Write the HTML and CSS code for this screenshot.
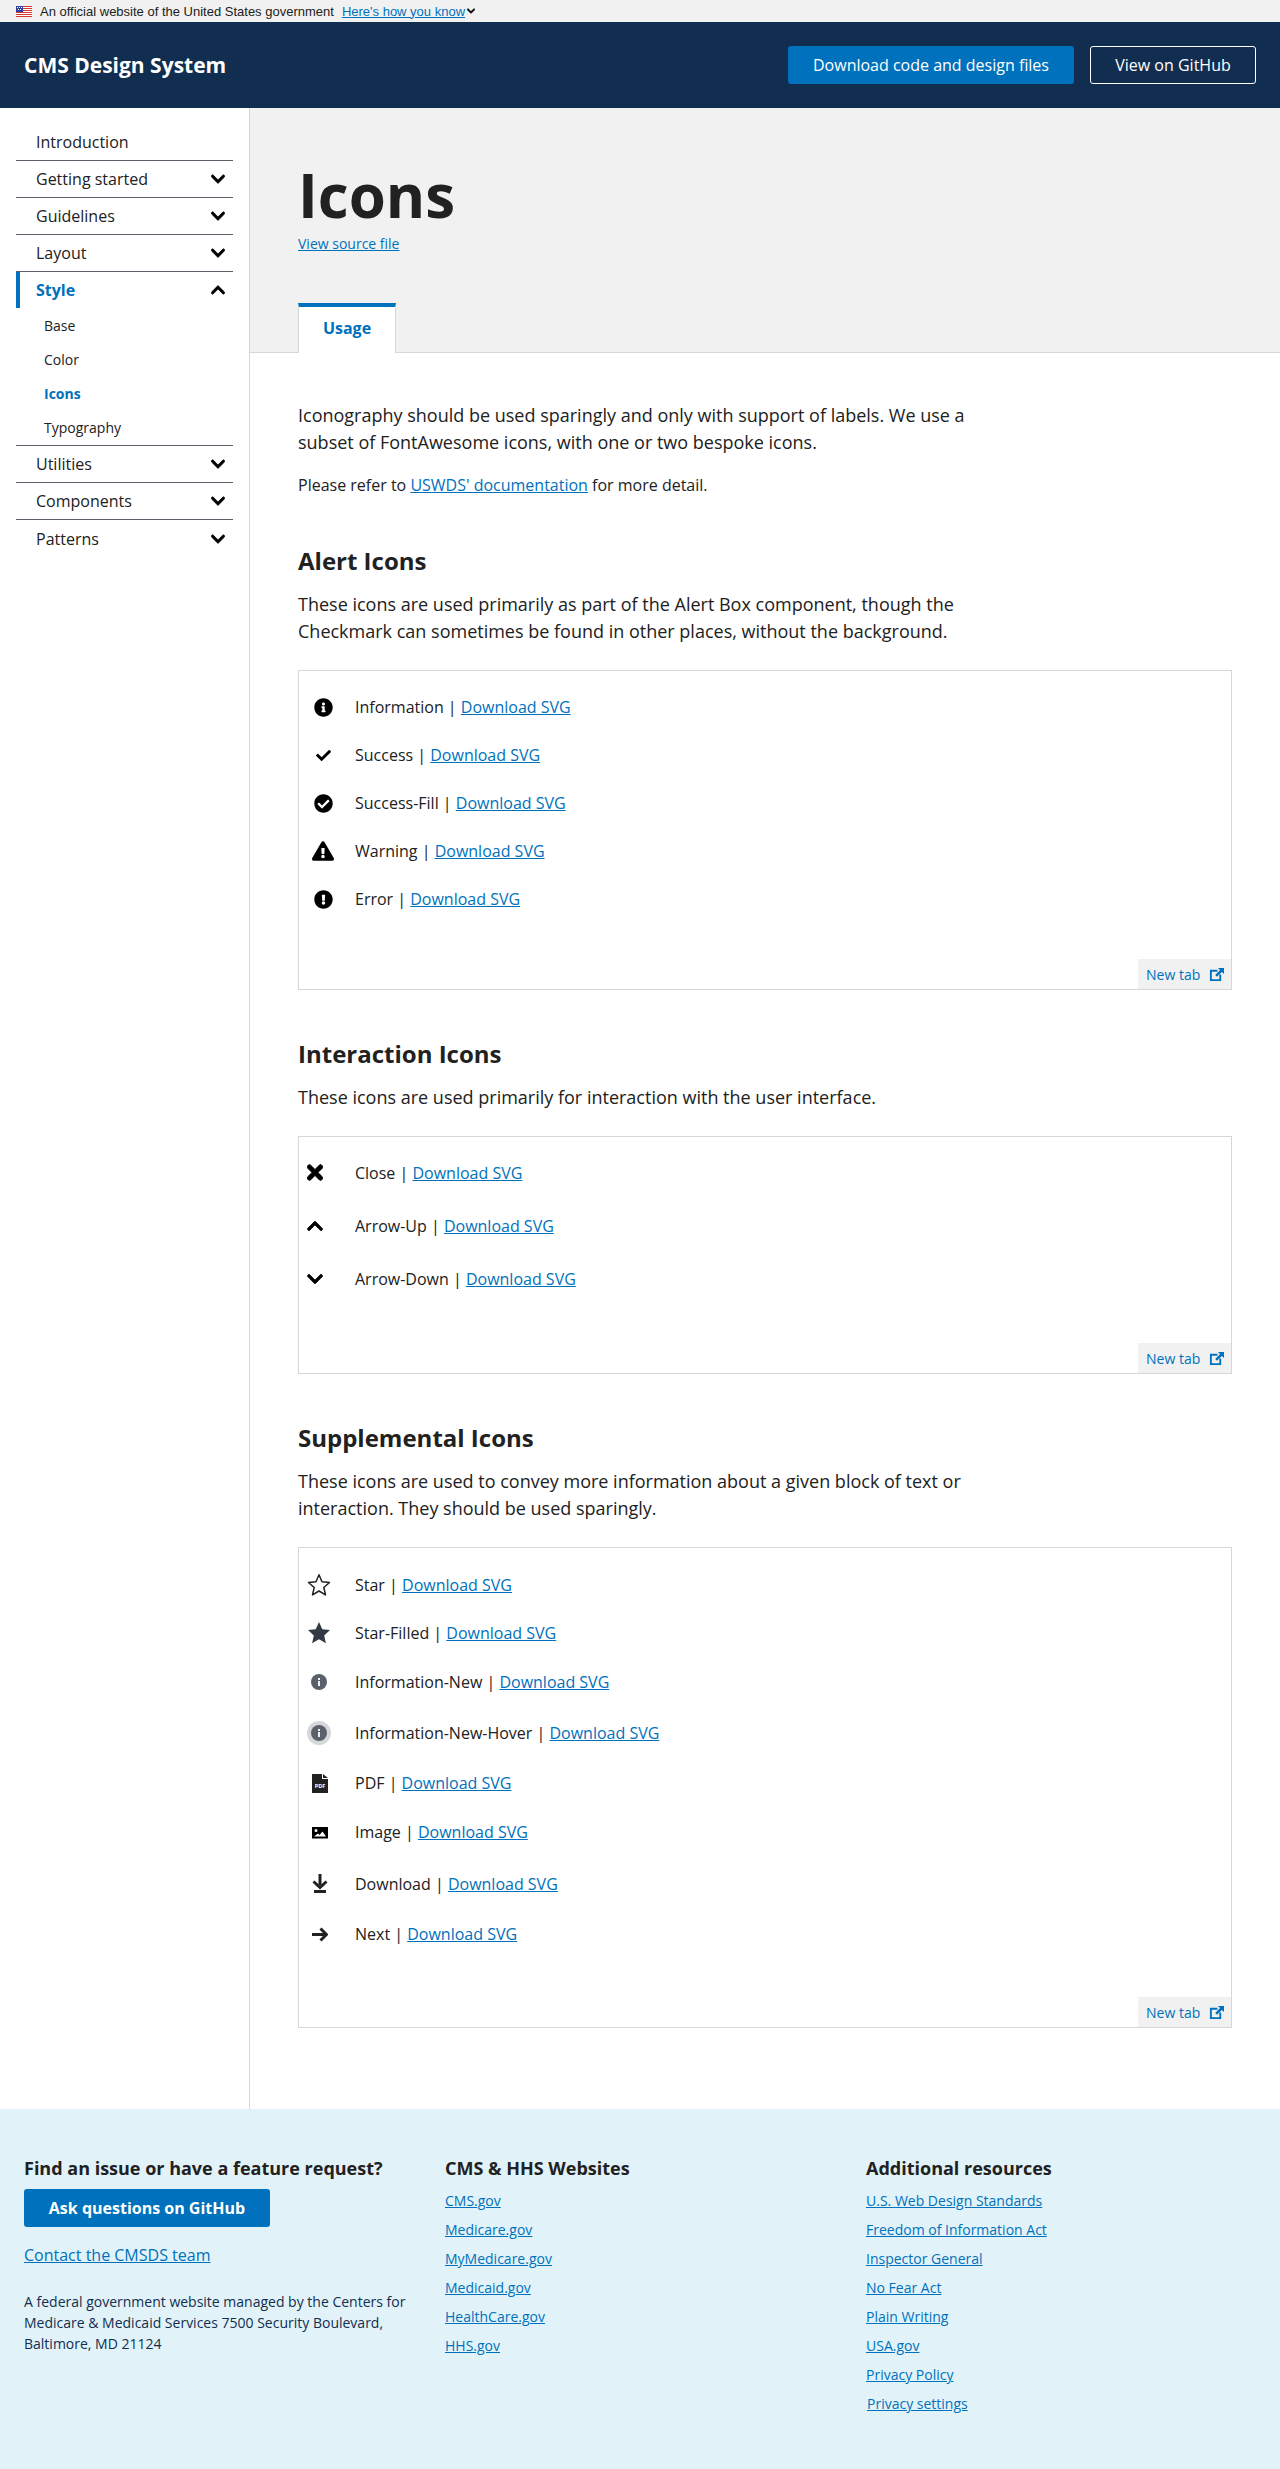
FILE: index.html
```html
<!DOCTYPE html>
<html lang="en">
<head>
    <meta charset="UTF-8">
    <meta name="viewport" content="width=device-width, initial-scale=1.0">
    <title>Icons - CMS Design System</title>
    <link rel="stylesheet" href="styles.css">
</head>
<body>
    <svg class="sprites" xmlns="http://www.w3.org/2000/svg">
        <symbol id="i-down" viewBox="0 0 448 512"><path d="M207.029 381.476L12.686 187.132c-9.373-9.373-9.373-24.569 0-33.941l22.667-22.667c9.357-9.357 24.522-9.375 33.901-.04L224 284.505l154.745-154.021c9.379-9.335 24.544-9.317 33.901.04l22.667 22.667c9.373 9.373 9.373 24.569 0 33.941L240.971 381.476c-9.373 9.372-24.569 9.372-33.942 0z"/></symbol>
        <symbol id="i-up" viewBox="0 0 448 512"><path d="M240.971 130.524l194.343 194.343c9.373 9.373 9.373 24.569 0 33.941l-22.667 22.667c-9.357 9.357-24.522 9.375-33.901.04L224 227.495 69.255 381.516c-9.379 9.335-24.544 9.317-33.901-.04l-22.667-22.667c-9.373-9.373-9.373-24.569 0-33.941L207.03 130.525c9.372-9.373 24.568-9.373 33.941-.001z"/></symbol>
        <symbol id="i-info" viewBox="0 0 512 512"><path d="M256 8C119.043 8 8 119.083 8 256c0 136.997 111.043 248 248 248s248-111.003 248-248C504 119.083 392.957 8 256 8zm0 110c23.196 0 42 18.804 42 42s-18.804 42-42 42-42-18.804-42-42 18.804-42 42-42zm56 254c0 6.627-5.373 12-12 12h-88c-6.627 0-12-5.373-12-12v-24c0-6.627 5.373-12 12-12h12v-64h-12c-6.627 0-12-5.373-12-12v-24c0-6.627 5.373-12 12-12h64c6.627 0 12 5.373 12 12v100h12c6.627 0 12 5.373 12 12v24z"/></symbol>
        <symbol id="i-check" viewBox="0 0 512 512"><path d="M173.898 439.404l-166.4-166.4c-9.997-9.997-9.997-26.206 0-36.204l36.203-36.204c9.997-9.998 26.207-9.998 36.204 0L192 312.69 432.095 72.596c9.997-9.997 26.207-9.997 36.204 0l36.203 36.204c9.997 9.997 9.997 26.206 0 36.204l-294.4 294.401c-9.998 9.997-26.207 9.997-36.204-.001z"/></symbol>
        <symbol id="i-check-circle" viewBox="0 0 512 512"><path d="M504 256c0 136.967-111.033 248-248 248S8 392.967 8 256 119.033 8 256 8s248 111.033 248 248zM227.314 387.314l184-184c6.248-6.248 6.248-16.379 0-22.627l-22.627-22.627c-6.248-6.249-16.379-6.249-22.628 0L216 308.118l-70.059-70.059c-6.248-6.248-16.379-6.248-22.628 0l-22.627 22.627c-6.248 6.248-6.248 16.379 0 22.627l104 104c6.249 6.249 16.379 6.249 22.628.001z"/></symbol>
        <symbol id="i-warning" viewBox="0 0 576 512"><path d="M569.517 440.013C587.975 472.007 564.806 512 527.94 512H48.054c-36.937 0-59.999-40.055-41.577-71.987L246.423 23.985c18.467-32.009 64.72-31.951 83.154 0l239.94 416.028zM288 354c-25.405 0-46 20.595-46 46s20.595 46 46 46 46-20.595 46-46-20.595-46-46-46zm-43.673-165.346l7.418 136c.347 6.364 5.609 11.346 11.982 11.346h48.546c6.373 0 11.635-4.982 11.982-11.346l7.418-136c.375-6.874-5.098-12.654-11.982-12.654h-63.383c-6.884 0-12.356 5.78-11.981 12.654z"/></symbol>
        <symbol id="i-error" viewBox="0 0 512 512"><path d="M504 256c0 136.997-111.043 248-248 248S8 392.997 8 256C8 119.083 119.043 8 256 8s248 111.083 248 248zm-248 50c-25.405 0-46 20.595-46 46s20.595 46 46 46 46-20.595 46-46-20.595-46-46-46zm-43.673-165.346l7.418 136c.347 6.364 5.609 11.346 11.982 11.346h48.546c6.373 0 11.635-4.982 11.982-11.346l7.418-136c.375-6.874-5.098-12.654-11.982-12.654h-63.383c-6.884 0-12.356 5.78-11.981 12.654z"/></symbol>
        <symbol id="i-close" viewBox="0 0 352 512"><path d="M242.72 256l100.07-100.07c12.28-12.28 12.28-32.19 0-44.48l-22.24-22.24c-12.28-12.28-32.19-12.28-44.48 0L176 189.28 75.93 89.21c-12.28-12.28-32.19-12.28-44.48 0L9.21 111.45c-12.28 12.28-12.28 32.19 0 44.48L109.28 256 9.21 356.07c-12.28 12.28-12.28 32.19 0 44.48l22.24 22.24c12.28 12.28 32.2 12.28 44.48 0L176 322.72l100.07 100.07c12.28 12.28 32.2 12.28 44.48 0l22.24-22.24c12.28-12.28 12.28-32.19 0-44.48L242.72 256z"/></symbol>
        <symbol id="i-external" viewBox="0 0 16 16"><path d="M1 3h8v2H3v8h8V8h2v7H1z"/><path d="M9.500 1H16v6.500l-2.300-2.300-5.200 5.200-1.900-1.900 5.200-5.200z"/></symbol>
    </svg>

    <div class="gov-banner">
        <svg class="flag" viewBox="0 0 16 11">
            <rect width="16" height="11" fill="#fff"/>
            <path d="M0 0h16v1H0zM0 2h16v1H0zM0 4h16v1H0zM0 6h16v1H0zM0 8h16v1H0zM0 10h16v1H0z" fill="#d83933"/>
            <rect width="7" height="6" fill="#2e3f9e"/>
            <path d="M1 1h1v1H1zM3 1h1v1H3zM5 1h1v1H5zM2 3h1v1H2zM4 3h1v1H4z" fill="#fff"/>
        </svg>
        <span>An official website of the United States government</span>
        <a href="#">Here's how you know</a>
        <svg class="banner-caret"><use href="#i-down"/></svg>
    </div>

    <header class="site-header">
        <a class="logo" href="#">CMS Design System</a>
        <div class="header-actions">
            <a class="btn btn-primary" href="#">Download code and design files</a>
            <a class="btn btn-outline" href="#">View on GitHub</a>
        </div>
    </header>

    <div class="page">
        <nav class="sidebar">
            <ul class="nav">
                <li class="nav-item"><a href="#">Introduction</a></li>
                <li class="nav-item"><a href="#">Getting started</a><svg class="caret"><use href="#i-down"/></svg></li>
                <li class="nav-item"><a href="#">Guidelines</a><svg class="caret"><use href="#i-down"/></svg></li>
                <li class="nav-item"><a href="#">Layout</a><svg class="caret"><use href="#i-down"/></svg></li>
                <li class="nav-item nav-open"><a href="#">Style</a><svg class="caret"><use href="#i-up"/></svg></li>
                <li class="nav-sub">
                    <a href="#">Base</a>
                    <a href="#">Color</a>
                    <a class="current" href="#">Icons</a>
                    <a href="#">Typography</a>
                </li>
                <li class="nav-item"><a href="#">Utilities</a><svg class="caret"><use href="#i-down"/></svg></li>
                <li class="nav-item"><a href="#">Components</a><svg class="caret"><use href="#i-down"/></svg></li>
                <li class="nav-item"><a href="#">Patterns</a><svg class="caret"><use href="#i-down"/></svg></li>
            </ul>
        </nav>

        <main class="main">
            <div class="hero">
                <h1>Icons</h1>
                <a class="source-link" href="#">View source file</a>
                <div class="tabs"><a class="tab" href="#">Usage</a></div>
            </div>

            <div class="content">
                <p class="lead">Iconography should be used sparingly and only with support of labels. We use a subset of FontAwesome icons, with one or two bespoke icons.</p>
                <p class="note">Please refer to <a href="#">USWDS' documentation</a> for more detail.</p>

                <h2>Alert Icons</h2>
                <p class="lead">These icons are used primarily as part of the Alert Box component, though the Checkmark can sometimes be found in other places, without the background.</p>
                <section class="panel panel-alert">
                    <div class="row"><span class="ico"><svg class="s19"><use href="#i-info"/></svg></span><span>Information | <a href="#">Download SVG</a></span></div>
                    <div class="row"><span class="ico"><svg class="s15"><use href="#i-check"/></svg></span><span>Success | <a href="#">Download SVG</a></span></div>
                    <div class="row"><span class="ico"><svg class="s19"><use href="#i-check-circle"/></svg></span><span>Success-Fill | <a href="#">Download SVG</a></span></div>
                    <div class="row"><span class="ico"><svg class="s22"><use href="#i-warning"/></svg></span><span>Warning | <a href="#">Download SVG</a></span></div>
                    <div class="row"><span class="ico"><svg class="s19"><use href="#i-error"/></svg></span><span>Error | <a href="#">Download SVG</a></span></div>
                    <a class="new-tab" href="#">New tab <svg><use href="#i-external"/></svg></a>
                </section>

                <h2>Interaction Icons</h2>
                <p class="lead">These icons are used primarily for interaction with the user interface.</p>
                <section class="panel panel-interaction">
                    <div class="row"><span class="ico"><svg class="s22"><use href="#i-close"/></svg></span><span>Close | <a href="#">Download SVG</a></span></div>
                    <div class="row"><span class="ico"><svg class="s18"><use href="#i-up"/></svg></span><span>Arrow-Up | <a href="#">Download SVG</a></span></div>
                    <div class="row"><span class="ico"><svg class="s18"><use href="#i-down"/></svg></span><span>Arrow-Down | <a href="#">Download SVG</a></span></div>
                    <a class="new-tab" href="#">New tab <svg><use href="#i-external"/></svg></a>
                </section>

                <h2>Supplemental Icons</h2>
                <p class="lead">These icons are used to convey more information about a given block of text or interaction. They should be used sparingly.</p>
                <section class="panel panel-supplemental">
                    <div class="row"><span class="ico">
                        <svg class="s24" viewBox="0 0 24 24"><path d="M12 1.800l3 7 7.500.7-5.700 5 1.700 7.400L12 18l-6.500 3.900 1.700-7.400-5.700-5 7.500-.7z" fill="none" stroke="#212121" stroke-width="1.500" stroke-linejoin="round"/></svg>
                    </span><span>Star | <a href="#">Download SVG</a></span></div>
                    <div class="row"><span class="ico">
                        <svg class="s24" viewBox="0 0 24 24"><path d="M12 1l3.300 7.300 7.700.8-5.800 5.300 1.700 7.800L12 18.200l-6.900 4 1.700-7.800L1 9.100l7.700-.8z" fill="#323a45"/></svg>
                    </span><span>Star-Filled | <a href="#">Download SVG</a></span></div>
                    <div class="row row-50"><span class="ico">
                        <svg class="s24" viewBox="0 0 24 24"><circle cx="12" cy="12" r="8" fill="#5b616b"/><rect x="11" y="11" width="2" height="5" fill="#f1f1f1"/><rect x="11" y="8" width="2" height="2" fill="#f1f1f1"/></svg>
                    </span><span>Information-New | <a href="#">Download SVG</a></span></div>
                    <div class="row row-52"><span class="ico">
                        <svg class="s24" viewBox="0 0 24 24"><circle cx="12" cy="12" r="12" fill="#d6d7d9"/><circle cx="12" cy="12" r="8" fill="#5b616b"/><rect x="11" y="11" width="2" height="5" fill="#f1f1f1"/><rect x="11" y="8" width="2" height="2" fill="#f1f1f1"/></svg>
                    </span><span>Information-New-Hover | <a href="#">Download SVG</a></span></div>
                    <div class="row"><span class="ico">
                        <svg class="doc" viewBox="0 0 16 19"><path d="M0 0h10v5h6v14H0zM11 0l5 4h-5z" fill="#212121"/><text x="8" y="14" class="doc-label">PDF</text></svg>
                    </span><span>PDF | <a href="#">Download SVG</a></span></div>
                    <div class="row row-50"><span class="ico">
                        <svg class="doc" viewBox="0 0 16 19"><path fill-rule="evenodd" d="M0 4h16v11.500H0zM4 6a1.500 1.500 0 1 0 0 3 1.500 1.500 0 0 0 0-3zM2 13.500h12l-3.500-5-3 3.500-1.500-1.500z" fill="#000"/></svg>
                    </span><span>Image | <a href="#">Download SVG</a></span></div>
                    <div class="row row-53"><span class="ico">
                        <svg class="doc" viewBox="0 0 16 19"><path d="M6.500 0h3v11h-3zM2 16h12v3H2z" fill="#212121"/><path d="M1.500 7.500L8 13.500l6.500-6" fill="none" stroke="#212121" stroke-width="3"/></svg>
                    </span><span>Download | <a href="#">Download SVG</a></span></div>
                    <div class="row"><span class="ico">
                        <svg class="doc" viewBox="0 0 16 19"><path d="M0 8h13v3H0z" fill="#212121"/><path d="M8.500 3.500l6 6-6 6" fill="none" stroke="#212121" stroke-width="3"/></svg>
                    </span><span>Next | <a href="#">Download SVG</a></span></div>
                    <a class="new-tab" href="#">New tab <svg><use href="#i-external"/></svg></a>
                </section>
            </div>
        </main>
    </div>

    <footer class="site-footer">
        <div class="footer-col">
            <h3>Find an issue or have a feature request?</h3>
            <a class="btn btn-primary btn-github" href="#">Ask questions on GitHub</a>
            <a class="contact" href="#">Contact the CMSDS team</a>
            <p class="address">A federal government website managed by the Centers for Medicare &amp; Medicaid Services 7500 Security Boulevard, Baltimore, MD 21124</p>
        </div>
        <div class="footer-col">
            <h3>CMS &amp; HHS Websites</h3>
            <ul class="footer-links">
                <li><a href="#">CMS.gov</a></li>
                <li><a href="#">Medicare.gov</a></li>
                <li><a href="#">MyMedicare.gov</a></li>
                <li><a href="#">Medicaid.gov</a></li>
                <li><a href="#">HealthCare.gov</a></li>
                <li><a href="#">HHS.gov</a></li>
            </ul>
        </div>
        <div class="footer-col">
            <h3>Additional resources</h3>
            <ul class="footer-links">
                <li><a href="#">U.S. Web Design Standards</a></li>
                <li><a href="#">Freedom of Information Act</a></li>
                <li><a href="#">Inspector General</a></li>
                <li><a href="#">No Fear Act</a></li>
                <li><a href="#">Plain Writing</a></li>
                <li><a href="#">USA.gov</a></li>
                <li><a href="#">Privacy Policy</a></li>
                <li class="privacy"><a href="#">Privacy settings</a></li>
            </ul>
        </div>
    </footer>
</body>
</html>
```

FILE: styles.css
```css
body {
    margin: 0;
    font-family: "Open Sans", sans-serif;
    font-size: 16px;
    color: #212121;
    background: #fff;
}
a {
    color: #0071bc;
}
.sprites {
    display: none;
}

/* gov banner */
.gov-banner {
    height: 22px;
    padding-left: 16px;
    display: flex;
    align-items: center;
    background: #f1f1f1;
    font-family: "Liberation Sans", Arial, sans-serif;
    font-size: 13px;
}
.flag {
    width: 16px;
    height: 11px;
    margin-right: 8px;
}
.gov-banner a {
    margin-left: 8px;
}
.banner-caret {
    width: 8px;
    height: 10px;
    margin-left: 2px;
    stroke: #000;
    stroke-width: 30;
}

/* header */
.site-header {
    height: 86px;
    padding: 0 24px;
    display: flex;
    align-items: center;
    justify-content: space-between;
    background: #112e51;
}
.logo {
    color: #fff;
    font-size: 21px;
    font-weight: 700;
    text-decoration: none;
}
.header-actions {
    display: flex;
    gap: 16px;
    margin-top: -1px;
}
.btn {
    box-sizing: border-box;
    height: 38px;
    display: flex;
    align-items: center;
    justify-content: center;
    border-radius: 3px;
    color: #fff;
    text-decoration: none;
}
.btn-primary {
    background: #0071bc;
    width: 286px;
}
.btn-outline {
    width: 166px;
    border: 1px solid #fff;
}

/* layout */
.page {
    display: flex;
}
.sidebar {
    box-sizing: border-box;
    width: 250px;
    padding: 16px 16px 0;
    border-right: 1px solid #d6d7d9;
    flex-shrink: 0;
}
.main {
    flex: 1;
    min-width: 0;
}

/* side nav */
.nav {
    list-style: none;
    margin: 0;
    padding: 0;
    width: 217px;
}
.nav-item {
    box-sizing: border-box;
    height: 37px;
    padding: 0 8px 0 20px;
    display: flex;
    align-items: center;
    justify-content: space-between;
    border-bottom: 1px solid #5b616b;
}
.nav-item a {
    color: #212121;
    text-decoration: none;
}
.nav-item:last-child {
    border-bottom: 0;
}
.nav-open {
    height: 36px;
    padding-left: 16px;
    border-bottom: 0;
    border-left: 4px solid #0071bc;
}
.nav-open a {
    color: #0071bc;
    font-weight: 700;
}
.caret {
    width: 14px;
    height: 16px;
    stroke: #000;
    stroke-width: 25;
}
.nav-sub {
    padding-bottom: 1px;
    border-bottom: 1px solid #5b616b;
}
.nav-sub a {
    display: flex;
    align-items: center;
    height: 34px;
    padding-left: 28px;
    color: #212121;
    font-size: 14px;
    text-decoration: none;
}
.nav-sub a.current {
    color: #0071bc;
    font-weight: 700;
}

/* page title */
.hero {
    box-sizing: border-box;
    height: 245px;
    padding: 46px 48px 0;
    background: #f1f1f1;
    border-bottom: 1px solid #d6d7d9;
    position: relative;
}
h1 {
    margin: 0;
    font-size: 60px;
    line-height: 82px;
    font-weight: 700;
}
.source-link {
    display: block;
    width: max-content;
    font-size: 14px;
    line-height: 16px;
}
.tabs {
    position: absolute;
    left: 48px;
    bottom: -1px;
}
.tab {
    box-sizing: border-box;
    width: 98px;
    height: 50px;
    padding-bottom: 4px;
    display: flex;
    align-items: center;
    justify-content: center;
    background: #fff;
    border: 1px solid #d6d7d9;
    border-top: 4px solid #0071bc;
    border-bottom: 0;
    font-weight: 700;
    text-decoration: none;
}

/* content */
.content {
    padding: 49px 48px 81px;
}
.lead {
    max-width: 700px;
    margin: 0;
    font-size: 18px;
    line-height: 27px;
}
.note {
    margin: 17px 0 0;
    line-height: 24px;
}
h2 {
    margin: 47px 0 14px;
    font-size: 24px;
    line-height: 33px;
    font-weight: 700;
}
.panel {
    box-sizing: border-box;
    margin-top: 25px;
    border: 1px solid #d6d7d9;
    position: relative;
}
.panel-alert {
    height: 320px;
    padding-top: 12px;
}
.panel-interaction {
    height: 238px;
    padding-top: 9px;
}
.panel-supplemental {
    height: 481px;
    padding-top: 13px;
}
.row {
    height: 48px;
    display: flex;
    align-items: center;
}
.panel-interaction .row {
    height: 53px;
}
.row-50 {
    height: 50px;
}
.row-52 {
    height: 52px;
}
.row-53 {
    height: 53px;
}
.ico {
    display: flex;
    justify-content: center;
    flex-shrink: 0;
}
.panel-alert .ico {
    padding-left: 13px;
    width: 22px;
    padding-right: 21px;
}
.panel-interaction .ico {
    padding-left: 8px;
    width: 16px;
    padding-right: 32px;
}
.panel-supplemental .ico {
    padding-left: 8px;
    width: 24px;
    padding-right: 24px;
}
.panel-interaction .ico svg {
    stroke: #000;
    stroke-width: 20;
}
.s15 { width: 15px; height: 15px; }
.s18 { width: 16px; height: 18px; }
.s19 { width: 19px; height: 19px; }
.s22 { width: 22px; height: 20px; }
.panel-interaction .s22 { width: 16px; height: 23px; }
.s24 { width: 24px; height: 24px; }
.doc { width: 16px; height: 19px; margin-left: 1px; }
.doc-label {
    fill: #fff;
    font-size: 5.500px;
    font-weight: 700;
    text-anchor: middle;
}
.new-tab {
    position: absolute;
    right: 0;
    bottom: 0;
    box-sizing: border-box;
    width: 93px;
    height: 30px;
    padding: 0 7px 0 8px;
    display: flex;
    align-items: center;
    justify-content: space-between;
    background: #f1f1f1;
    font-size: 14px;
    text-decoration: none;
}
.new-tab svg {
    width: 15px;
    height: 15px;
    fill: #0071bc;
}

/* footer */
.site-footer {
    box-sizing: border-box;
    height: 360px;
    padding: 47px 24px 0;
    display: grid;
    grid-template-columns: 421px 421px 1fr;
    background: #e1f3f8;
}
.site-footer h3 {
    margin: 0;
    font-size: 18px;
    line-height: 24px;
    font-weight: 700;
}
.btn-github {
    width: 246px;
    margin-top: 9px;
    font-weight: 700;
}
.contact {
    display: block;
    margin-top: 17px;
    line-height: 22px;
}
.address {
    width: 395px;
    margin: 25px 0 0;
    font-size: 14px;
    line-height: 21px;
    color: #112e51;
}
.footer-links {
    list-style: none;
    margin: 6px 0 0;
    padding: 0;
    font-size: 14px;
}
.footer-links li {
    height: 29px;
    line-height: 29px;
}
.privacy {
    padding-left: 1px;
}
```
